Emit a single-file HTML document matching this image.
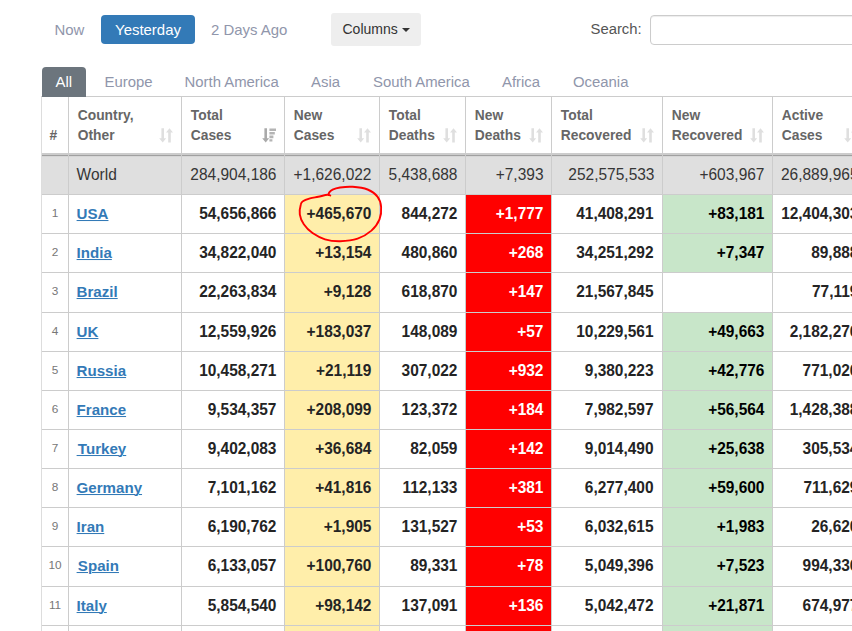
<!DOCTYPE html>
<html><head><meta charset="utf-8">
<style>
html,body{margin:0;padding:0;background:#fff;}
body{width:852px;height:631px;overflow:hidden;position:relative;font-family:"Liberation Sans",Arial,sans-serif;color:#222;}
.abs{position:absolute;white-space:nowrap;}
.pill{font-size:14.95px;color:#9096ab;top:15px;height:29px;line-height:29px;}
.tab{font-size:14.9px;color:#9096ab;top:67px;height:30px;line-height:31px;}
#tbl{position:absolute;left:41px;top:96px;border-collapse:separate;border-spacing:0;table-layout:fixed;width:826px;border-left:1px solid #ddd;border-top:1px solid #ccc;}
#tbl td,#tbl th{border-right:1px solid #ccc;border-bottom:1px solid #ccc;box-sizing:border-box;padding:0;overflow:hidden;white-space:nowrap;}
#tbl th{height:58px;font-size:13.8px;font-weight:bold;color:#666;text-align:left;vertical-align:top;border-bottom:2px solid #ccc;}
.hw{position:relative;height:56px;box-sizing:border-box;padding:8.9px 0 0 8.8px;line-height:20px;}
.hn .hw{padding:28.9px 0 0 7.4px;}
#tbl tr.w td{height:40px;background:#dfdfdf;font-size:15.5px;font-weight:normal;color:#363636;box-shadow:inset 0 1px 0 #a0a0a0, inset 0 2px 0 rgba(0,0,0,.04);padding-top:11px;padding-bottom:0;padding-right:7.5px;}
#tbl td{font-size:15.45px;font-weight:bold;text-align:right;padding-right:7.6px;color:#242424;vertical-align:top;padding-top:10px;padding-bottom:0;line-height:18px;}
#tbl td:nth-child(7){padding-right:8.5px;}
#tbl td.n{font-size:11.8px;font-weight:normal;color:#777;text-align:center;padding:9.4px 0 0 0;}
#tbl td.c{text-align:left;padding-left:7.6px;}
#tbl td.c a{color:#337ab7;text-decoration:underline;font-size:15.1px;}
#tbl .v{display:inline-block;transform:scaleY(1.07);transform-origin:50% 82%;}
#tbl td.c a{display:inline-block;transform:scaleY(1.03);transform-origin:50% 82%;position:relative;top:-0.5px;text-decoration-thickness:1px;}
.y{background:#ffeeaa;}
.r{background:#ff0000;color:#fff !important;}
.g{background:#c8e6c9;color:#000 !important;}
.si{position:absolute;right:8px;top:31px;width:14px;height:15px;}
</style></head><body>
<div class="abs pill" style="left:54.5px;">Now</div>
<div class="abs pill" style="left:101px;width:94px;background:#337ab7;color:#fff;border-radius:4px;text-align:center;">Yesterday</div>
<div class="abs pill" style="left:211px;">2 Days Ago</div>
<div class="abs" style="left:331px;top:13px;width:90px;height:33px;background:#eeeeee;border-radius:3px;font-size:14px;line-height:32px;color:#333;text-align:left;padding-left:11.5px;box-sizing:border-box;">Columns <span style="display:inline-block;width:0;height:0;border-left:4px solid transparent;border-right:4px solid transparent;border-top:4px solid #333;vertical-align:middle;margin-left:0px;"></span></div>
<div class="abs" style="left:590.5px;top:15px;height:29px;line-height:28px;font-size:14.85px;color:#555;">Search:</div>
<div class="abs" style="left:650px;top:15px;width:220px;height:30px;border:1px solid #ccc;box-shadow:inset 0 1px 1px rgba(0,0,0,.075);border-radius:4px;box-sizing:border-box;background:#fff;"></div>

<div class="abs tab" style="left:42px;width:43.5px;background:#6c757d;color:#fff;border-radius:4px 4px 0 0;text-align:center;z-index:2;">All</div>
<div class="abs tab" style="left:104.5px;">Europe</div>
<div class="abs tab" style="left:184.5px;">North America</div>
<div class="abs tab" style="left:311px;">Asia</div>
<div class="abs tab" style="left:373px;">South America</div>
<div class="abs tab" style="left:502px;">Africa</div>
<div class="abs tab" style="left:573px;">Oceania</div>

<table id="tbl">
<colgroup><col style="width:27px"><col style="width:113px"><col style="width:103px"><col style="width:95px"><col style="width:86px"><col style="width:86px"><col style="width:111px"><col style="width:110px"><col style="width:94px"></colgroup>
<tr class="h"><th class="hn"><div class="hw">#</div></th><th><div class="hw">Country,<br>Other<svg class="si" viewBox="0 0 14 15"><path d="M2.4 0.3h2.6v10h2.2L3.7 14.6L0.2 10.3h2.2zM9.2 14.6h2.6V4.6h2.2L10.5 0.3L7 4.6h2.2z" fill="#dfdfdf"/></svg></div></th><th><div class="hw">Total<br>Cases<svg class="si" viewBox="0 0 14 15"><path d="M2.4 0.3h2.6v10h2.2L3.7 14.6L0.2 10.3h2.2z" fill="#aaa"/><path d="M7.4 0.4h6.8v2.6H7.4zM7.4 4h5.4v2.6H7.4zM7.4 7.6h4v2.6H7.4zM7.4 11.2h3v2.4h-3z" fill="#b4b4b4"/></svg></div></th><th><div class="hw">New<br>Cases<svg class="si" viewBox="0 0 14 15"><path d="M2.4 0.3h2.6v10h2.2L3.7 14.6L0.2 10.3h2.2zM9.2 14.6h2.6V4.6h2.2L10.5 0.3L7 4.6h2.2z" fill="#dfdfdf"/></svg></div></th><th><div class="hw">Total<br>Deaths<svg class="si" viewBox="0 0 14 15"><path d="M2.4 0.3h2.6v10h2.2L3.7 14.6L0.2 10.3h2.2zM9.2 14.6h2.6V4.6h2.2L10.5 0.3L7 4.6h2.2z" fill="#dfdfdf"/></svg></div></th><th><div class="hw">New<br>Deaths<svg class="si" viewBox="0 0 14 15"><path d="M2.4 0.3h2.6v10h2.2L3.7 14.6L0.2 10.3h2.2zM9.2 14.6h2.6V4.6h2.2L10.5 0.3L7 4.6h2.2z" fill="#dfdfdf"/></svg></div></th><th><div class="hw">Total<br>Recovered<svg class="si" viewBox="0 0 14 15"><path d="M2.4 0.3h2.6v10h2.2L3.7 14.6L0.2 10.3h2.2zM9.2 14.6h2.6V4.6h2.2L10.5 0.3L7 4.6h2.2z" fill="#dfdfdf"/></svg></div></th><th><div class="hw">New<br>Recovered<svg class="si" viewBox="0 0 14 15"><path d="M2.4 0.3h2.6v10h2.2L3.7 14.6L0.2 10.3h2.2zM9.2 14.6h2.6V4.6h2.2L10.5 0.3L7 4.6h2.2z" fill="#dfdfdf"/></svg></div></th><th><div class="hw">Active<br>Cases<svg class="si" viewBox="0 0 14 15"><path d="M2.4 0.3h2.6v10h2.2L3.7 14.6L0.2 10.3h2.2zM9.2 14.6h2.6V4.6h2.2L10.5 0.3L7 4.6h2.2z" fill="#dfdfdf"/></svg></div></th></tr>
<tr class="w"><td class="n"></td><td class="c"><span class="v">World</span></td><td><span class="v">284,904,186</span></td><td><span class="v">+1,626,022</span></td><td><span class="v">5,438,688</span></td><td><span class="v">+7,393</span></td><td><span class="v">252,575,533</span></td><td><span class="v">+603,967</span></td><td><span class="v">26,889,965</span></td></tr>
<tr style="height:39px"><td class="n">1</td><td class="c"><a>USA</a></td><td><span class="v">54,656,866</span></td><td class="y"><span class="v">+465,670</span></td><td><span class="v">844,272</span></td><td class="r"><span class="v">+1,777</span></td><td><span class="v">41,408,291</span></td><td class="g"><span class="v">+83,181</span></td><td><span class="v">12,404,303</span></td></tr>
<tr style="height:39px"><td class="n">2</td><td class="c"><a>India</a></td><td><span class="v">34,822,040</span></td><td class="y"><span class="v">+13,154</span></td><td><span class="v">480,860</span></td><td class="r"><span class="v">+268</span></td><td><span class="v">34,251,292</span></td><td class="g"><span class="v">+7,347</span></td><td><span class="v">89,888</span></td></tr>
<tr style="height:40px"><td class="n">3</td><td class="c"><a>Brazil</a></td><td><span class="v">22,263,834</span></td><td class="y"><span class="v">+9,128</span></td><td><span class="v">618,870</span></td><td class="r"><span class="v">+147</span></td><td><span class="v">21,567,845</span></td><td><span class="v"></span></td><td><span class="v">77,119</span></td></tr>
<tr style="height:39px"><td class="n">4</td><td class="c"><a>UK</a></td><td><span class="v">12,559,926</span></td><td class="y"><span class="v">+183,037</span></td><td><span class="v">148,089</span></td><td class="r"><span class="v">+57</span></td><td><span class="v">10,229,561</span></td><td class="g"><span class="v">+49,663</span></td><td><span class="v">2,182,276</span></td></tr>
<tr style="height:39px"><td class="n">5</td><td class="c"><a>Russia</a></td><td><span class="v">10,458,271</span></td><td class="y"><span class="v">+21,119</span></td><td><span class="v">307,022</span></td><td class="r"><span class="v">+932</span></td><td><span class="v">9,380,223</span></td><td class="g"><span class="v">+42,776</span></td><td><span class="v">771,026</span></td></tr>
<tr style="height:39px"><td class="n">6</td><td class="c"><a>France</a></td><td><span class="v">9,534,357</span></td><td class="y"><span class="v">+208,099</span></td><td><span class="v">123,372</span></td><td class="r"><span class="v">+184</span></td><td><span class="v">7,982,597</span></td><td class="g"><span class="v">+56,564</span></td><td><span class="v">1,428,388</span></td></tr>
<tr style="height:39px"><td class="n">7</td><td class="c"><a> Turkey</a></td><td><span class="v">9,402,083</span></td><td class="y"><span class="v">+36,684</span></td><td><span class="v">82,059</span></td><td class="r"><span class="v">+142</span></td><td><span class="v">9,014,490</span></td><td class="g"><span class="v">+25,638</span></td><td><span class="v">305,534</span></td></tr>
<tr style="height:39px"><td class="n">8</td><td class="c"><a>Germany</a></td><td><span class="v">7,101,162</span></td><td class="y"><span class="v">+41,816</span></td><td><span class="v">112,133</span></td><td class="r"><span class="v">+381</span></td><td><span class="v">6,277,400</span></td><td class="g"><span class="v">+59,600</span></td><td><span class="v">711,629</span></td></tr>
<tr style="height:39px"><td class="n">9</td><td class="c"><a>Iran</a></td><td><span class="v">6,190,762</span></td><td class="y"><span class="v">+1,905</span></td><td><span class="v">131,527</span></td><td class="r"><span class="v">+53</span></td><td><span class="v">6,032,615</span></td><td class="g"><span class="v">+1,983</span></td><td><span class="v">26,620</span></td></tr>
<tr style="height:40px"><td class="n">10</td><td class="c"><a> Spain</a></td><td><span class="v">6,133,057</span></td><td class="y"><span class="v">+100,760</span></td><td><span class="v">89,331</span></td><td class="r"><span class="v">+78</span></td><td><span class="v">5,049,396</span></td><td class="g"><span class="v">+7,523</span></td><td><span class="v">994,336</span></td></tr>
<tr style="height:39px"><td class="n">11</td><td class="c"><a>Italy</a></td><td><span class="v">5,854,540</span></td><td class="y"><span class="v">+98,142</span></td><td><span class="v">137,091</span></td><td class="r"><span class="v">+136</span></td><td><span class="v">5,042,472</span></td><td class="g"><span class="v">+21,871</span></td><td><span class="v">674,977</span></td></tr>
<tr style="height:39px"><td class="n">12</td><td class="c"><a>Argentina</a></td><td><span class="v">5,556,239</span></td><td class="y"><span class="v">+42,032</span></td><td><span class="v">117,111</span></td><td class="r"><span class="v">+26</span></td><td><span class="v">5,060,500</span></td><td class="g"><span class="v">+2,250</span></td><td><span class="v">378,628</span></td></tr>
</table>
<svg class="abs" style="left:290px;top:178px;" width="106" height="79" viewBox="290 178 106 79"><path d="M330.3 195.6C329.8 195.5 329.6 194.6 327.5 194.8C325.5 195.0 321.1 196.2 318.2 196.8C315.2 197.4 312.6 197.7 310.0 198.4C307.5 199.1 304.4 200.1 302.9 201.2C301.3 202.2 301.3 202.3 300.8 204.5C300.2 206.7 299.3 211.0 299.8 214.3C300.3 217.6 301.6 221.2 303.8 224.3C305.9 227.4 309.0 230.6 312.5 233.1C316.1 235.6 320.5 238.0 325.0 239.3C329.6 240.7 334.6 241.3 340.1 241.2C345.5 241.1 352.4 240.5 357.6 238.7C362.8 236.9 367.7 233.8 371.4 230.6C375.0 227.3 377.9 223.3 379.5 219.3C381.1 215.3 381.4 210.5 381.1 206.8C380.8 203.0 379.9 199.7 377.6 196.8C375.4 193.9 371.8 191.2 367.6 189.5C363.4 187.8 357.2 187.1 352.6 186.8C348.0 186.4 343.4 187.0 340.1 187.5C336.7 188.0 334.3 188.8 332.6 189.6C330.8 190.5 330.0 191.5 329.3 192.4C328.6 193.3 328.5 194.6 328.3 195.0" stroke="#f00" stroke-width="1.9" fill="none" stroke-linecap="round" stroke-linejoin="round"/></svg>
</body></html>
